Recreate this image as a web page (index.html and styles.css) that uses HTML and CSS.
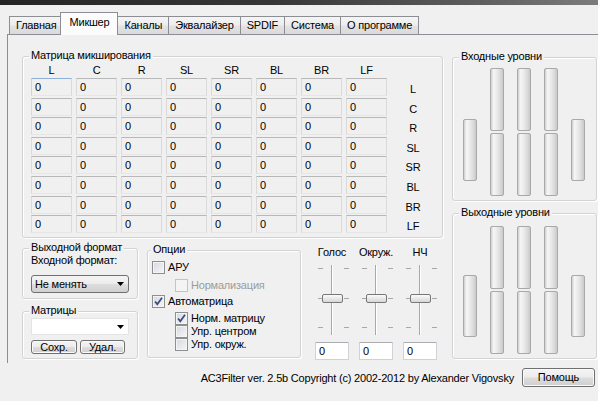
FILE: index.html
```html
<!DOCTYPE html>
<html lang="ru">
<head>
<meta charset="utf-8">
<title>AC3Filter</title>
<link rel="stylesheet" href="styles.css">
</head>
<body>
<div class="titlebar"></div>
<div class="tabs">
  <div class="tab">Главная</div>
  <div class="tab active">Микшер</div>
  <div class="tab">Каналы</div>
  <div class="tab">Эквалайзер</div>
  <div class="tab">SPDIF</div>
  <div class="tab">Система</div>
  <div class="tab">О программе</div>
</div>
<div class="panel">
  <div class="leftcol">
    <div class="group matrix">
      <div class="gtitle">Матрица микширования</div>
      <div class="mhead">
        <span>L</span><span>C</span><span>R</span><span>SL</span><span>SR</span><span>BL</span><span>BR</span><span>LF</span><span></span>
      </div>
      <div class="mgrid">
        <div class="cell focus">0</div><div class="cell">0</div><div class="cell">0</div><div class="cell">0</div><div class="cell">0</div><div class="cell">0</div><div class="cell">0</div><div class="cell">0</div><div class="rlabel">L</div>
        <div class="cell">0</div><div class="cell">0</div><div class="cell">0</div><div class="cell">0</div><div class="cell">0</div><div class="cell">0</div><div class="cell">0</div><div class="cell">0</div><div class="rlabel">C</div>
        <div class="cell">0</div><div class="cell">0</div><div class="cell">0</div><div class="cell">0</div><div class="cell">0</div><div class="cell">0</div><div class="cell">0</div><div class="cell">0</div><div class="rlabel">R</div>
        <div class="cell">0</div><div class="cell">0</div><div class="cell">0</div><div class="cell">0</div><div class="cell">0</div><div class="cell">0</div><div class="cell">0</div><div class="cell">0</div><div class="rlabel">SL</div>
        <div class="cell">0</div><div class="cell">0</div><div class="cell">0</div><div class="cell">0</div><div class="cell">0</div><div class="cell">0</div><div class="cell">0</div><div class="cell">0</div><div class="rlabel">SR</div>
        <div class="cell">0</div><div class="cell">0</div><div class="cell">0</div><div class="cell">0</div><div class="cell">0</div><div class="cell">0</div><div class="cell">0</div><div class="cell">0</div><div class="rlabel">BL</div>
        <div class="cell">0</div><div class="cell">0</div><div class="cell">0</div><div class="cell">0</div><div class="cell">0</div><div class="cell">0</div><div class="cell">0</div><div class="cell">0</div><div class="rlabel">BR</div>
        <div class="cell">0</div><div class="cell">0</div><div class="cell">0</div><div class="cell">0</div><div class="cell">0</div><div class="cell">0</div><div class="cell">0</div><div class="cell">0</div><div class="rlabel">LF</div>
      </div>
    </div>
    <div class="bottom">
      <div class="lcol">
        <div class="group fmt">
          <div class="gtitle">Выходной формат</div>
          <div class="flabel">Входной формат:</div>
          <div class="combo">
            <span>Не менять</span>
            <svg class="arrow" width="7" height="4" viewBox="0 0 7 4"><polygon points="0,0 7,0 3.5,4" fill="#000"/></svg>
          </div>
        </div>
        <div class="group mats">
          <div class="gtitle">Матрицы</div>
          <div class="ecombo">
            <svg class="arrow" width="7" height="4" viewBox="0 0 7 4"><polygon points="0,0 7,0 3.5,4" fill="#000"/></svg>
          </div>
          <div class="btns">
            <div class="btn save">Сохр.</div>
            <div class="btn del">Удал.</div>
          </div>
        </div>
      </div>
      <div class="group opts">
        <div class="gtitle">Опции</div>
        <div class="chk r1"><span class="box"></span><span>АРУ</span></div>
        <div class="chk sub r2 disabled"><span class="box"></span><span>Нормализация</span></div>
        <div class="chk r3"><span class="box"><svg width="11" height="11" viewBox="0 0 11 11"><path d="M2 5.5 L4.3 8.2 L9 1.8" fill="none" stroke="#3c4f7c" stroke-width="1.8"/></svg></span><span>Автоматрица</span></div>
        <div class="chk sub r4"><span class="box"><svg width="11" height="11" viewBox="0 0 11 11"><path d="M2 5.5 L4.3 8.2 L9 1.8" fill="none" stroke="#3c4f7c" stroke-width="1.8"/></svg></span><span>Норм. матрицу</span></div>
        <div class="chk sub"><span class="box"></span><span>Упр. центром</span></div>
        <div class="chk sub"><span class="box"></span><span>Упр. окруж.</span></div>
      </div>
      <div class="sliders">
        <div class="scol">
          <div class="slabel">Голос</div>
          <div class="slider">
            <span class="track"></span>
            <span class="tick tl t1"></span><span class="tick tr t1"></span>
            <span class="tick tl t2"></span><span class="tick tr t2"></span>
            <span class="tick tl t3"></span><span class="tick tr t3"></span>
            <span class="thumb"></span>
          </div>
          <div class="sedit">0</div>
        </div>
        <div class="scol">
          <div class="slabel">Окруж.</div>
          <div class="slider">
            <span class="track"></span>
            <span class="tick tl t1"></span><span class="tick tr t1"></span>
            <span class="tick tl t2"></span><span class="tick tr t2"></span>
            <span class="tick tl t3"></span><span class="tick tr t3"></span>
            <span class="thumb"></span>
          </div>
          <div class="sedit">0</div>
        </div>
        <div class="scol">
          <div class="slabel">НЧ</div>
          <div class="slider">
            <span class="track"></span>
            <span class="tick tl t1"></span><span class="tick tr t1"></span>
            <span class="tick tl t2"></span><span class="tick tr t2"></span>
            <span class="tick tl t3"></span><span class="tick tr t3"></span>
            <span class="thumb"></span>
          </div>
          <div class="sedit">0</div>
        </div>
      </div>
    </div>
  </div>
  <div class="rightcol">
    <div class="group levels lin">
      <div class="gtitle">Входные уровни</div>
      <div class="bars">
        <div class="bar side"></div>
        <div class="stack"><div class="bar"></div><div class="bar"></div></div>
        <div class="stack"><div class="bar"></div><div class="bar"></div></div>
        <div class="stack"><div class="bar"></div><div class="bar"></div></div>
        <div class="bar side"></div>
      </div>
    </div>
    <div class="group levels lout">
      <div class="gtitle">Выходные уровни</div>
      <div class="bars">
        <div class="bar side"></div>
        <div class="stack"><div class="bar"></div><div class="bar"></div></div>
        <div class="stack"><div class="bar"></div><div class="bar"></div></div>
        <div class="stack"><div class="bar"></div><div class="bar"></div></div>
        <div class="bar side"></div>
      </div>
    </div>
  </div>
</div>
<div class="footer">
  <span class="copy">AC3Filter ver. 2.5b Copyright (c) 2002-2012 by Alexander Vigovsky</span>
  <div class="btn help">Помощь</div>
</div>
</body>
</html>
```
FILE: styles.css
```css
* { box-sizing: border-box; }
html, body { margin: 0; padding: 0; }
body {
  width: 598px;
  height: 401px;
  overflow: hidden;
  background: #f0f0f0;
  font-family: "Liberation Sans", Arial, sans-serif;
  font-size: 11px;
  letter-spacing: -0.2px;
  color: #000;
}

.titlebar {
  height: 5px;
  background: linear-gradient(to right, #252525, #363636 45%, #5e5e5e 80%, #7c7c7c);
}

/* tabs */
.tabs {
  display: flex;
  align-items: flex-end;
  height: 21px;
  margin: 8px 0 0 9px;
}
.tab {
  height: 18px;
  line-height: 16px;
  padding: 0 6px;
  border: 1px solid #8c8e94;
  border-bottom: none;
  margin-right: -1px;
  background: linear-gradient(#f5f5f5, #ededed 45%, #e2e2e2 55%, #dadada);
  white-space: nowrap;
}
.tab.active {
  position: relative;
  z-index: 1;
  height: 23px;
  line-height: 19px;
  margin: 0 -1px -1px -2px;
  padding: 0 8px;
  background: #fcfcfc;
}

/* panel */
.panel {
  display: flex;
  margin-left: 7px;
  width: 600px;
  height: 329px;
  padding-left: 14px;
  border-left: 1px solid #8c8e94;
  border-top: 1px solid #8c8e94;
  background: #f0f0f0;
}
.leftcol { width: 421px; }
.rightcol { width: 145px; margin-left: 9px; }

.group {
  border: 1px solid #d3d3d3;
  border-radius: 3px;
  box-shadow: inset 1px 1px 0 #fff, 1px 1px 0 #fff;
}
.gtitle {
  width: fit-content;
  height: 13px;
  line-height: 13px;
  margin: -8px 0 0 6px;
  padding: 0 2px;
  background: #f0f0f0;
  white-space: nowrap;
}

/* matrix */
.matrix { margin-top: 21px; height: 182px; }
.mhead, .mgrid {
  display: grid;
  grid-template-columns: repeat(8, 41px) 44px;
  column-gap: 4px;
  padding-left: 8px;
}
.mhead { height: 16px; line-height: 16px; text-align: center; }
.mgrid { grid-auto-rows: 18px; row-gap: 1.6px; }
.cell {
  border: 1px solid #dadada;
  border-top-color: #b8b8b8;
  border-bottom-color: #e6e6e6;
  background: #f0f0f0;
  line-height: 16px;
  padding-left: 3px;
}
.cell.focus { border-top-color: #8fb0d8; border-left-color: #c5d5e8; }
.rlabel { text-align: center; line-height: 18px; padding-top: 2px; }

/* bottom row */
.bottom { display: flex; }
.lcol { width: 116px; margin-top: 10px; }
.fmt { height: 51px; }
.flabel { padding-left: 8px; line-height: 13px; }
.combo {
  display: flex;
  align-items: center;
  justify-content: space-between;
  width: 98px;
  height: 18px;
  margin: 8px 0 0 8px;
  padding: 0 4px 0 3px;
  border: 1px solid #707070;
  border-radius: 3px;
  background: linear-gradient(#f4f4f4, #ececec 48%, #dddddd 52%, #d0d0d0);
}
.arrow { display: block; }
.mats { margin-top: 12px; height: 48px; }
.ecombo {
  display: flex;
  align-items: center;
  justify-content: flex-end;
  width: 98px;
  height: 17px;
  margin: 1px 0 0 8px;
  padding-right: 4px;
  background: #fff;
  border: 1px solid #e4e4e4;
}
.btns { display: flex; gap: 3px; margin: 5px 0 0 8px; }
.btn {
  height: 14px;
  line-height: 12px;
  text-align: center;
  border: 1px solid #707070;
  border-radius: 3px;
  background: linear-gradient(#f4f4f4, #ececec 48%, #dddddd 52%, #cfcfcf);
  box-shadow: inset 0 0 0 1px #fafafa;
}
.btn.save { width: 46px; }
.btn.del { width: 45px; }

.opts { width: 154px; height: 108px; margin: 12px 0 0 9px; }
.opts .gtitle { margin-left: 3px; }
.chk {
  display: flex;
  align-items: center;
  gap: 3px;
  height: 13px;
  line-height: 13px;
  padding-left: 4px;
}
.chk.sub { padding-left: 27px; }
.chk.r1 { margin-top: 5px; }
.chk.r2 { margin-top: 5px; }
.chk.r3 { margin-top: 3px; }
.chk.r4 { margin-top: 4px; }
.box {
  display: flex;
  align-items: center;
  justify-content: center;
  width: 13px;
  height: 13px;
  flex: none;
  border: 1px solid #8e8f8f;
  background: linear-gradient(135deg, #d4d8de, #f7f7f7);
  box-shadow: inset 0 0 0 1px #f4f4f4;
}
.box svg { display: block; }
.chk.disabled { color: #9c9c9c; }
.chk.disabled .box { border-color: #c4c4c4; background: #f4f4f4; box-shadow: none; }

/* sliders */
.sliders { display: flex; padding-left: 8px; margin-left: 1px; }
.scol { width: 44px; display: flex; flex-direction: column; align-items: center; }
.slabel { margin-top: 8px; line-height: 13px; white-space: nowrap; }
.slider { position: relative; width: 44px; height: 76px; margin-top: 3px; }
.track {
  position: absolute;
  left: 21px;
  top: 3px;
  width: 2px;
  height: 70px;
  border-left: 1px solid #a8a8a8;
  border-right: 1px solid #fff;
}
.tick { position: absolute; width: 5px; height: 1px; background: #a8a8a8; }
.tick.tl { left: 8px; }
.tick.tr { left: 34px; }
.tick.t1 { top: 6px; }
.tick.t2 { top: 36px; }
.tick.t3 { top: 65px; }
.thumb {
  position: absolute;
  left: 12px;
  top: 32px;
  width: 21px;
  height: 9px;
  border: 1px solid #777;
  border-radius: 2px;
  background: linear-gradient(#fbfbfb, #e8e8e8 50%, #d8d8d8);
}
.sedit {
  margin-top: 4px;
  width: 34px;
  height: 18px;
  line-height: 16px;
  padding-left: 3px;
  background: #fff;
  border: 1px solid #cfd2d8;
  border-top-color: #abadb3;
}

/* levels */
.lin { margin-top: 22px; height: 144px; }
.lout { margin-top: 12px; height: 146px; }
.bars {
  display: flex;
  align-items: flex-start;
  gap: 13px;
  padding-left: 10px;
  margin-top: 5px;
}
.lout .bars { margin-top: 7px; }
.stack { display: flex; flex-direction: column; gap: 2px; }
.bar {
  width: 14px;
  height: 63px;
  border: 1px solid #a9a9a9;
  border-radius: 2px;
  background: linear-gradient(to right, #cfcfcf 0%, #f6f6f6 22%, #ececec 45%, #dcdcdc 75%, #c9c9c9 100%);
}
.bar.side { height: 62px; margin-top: 51px; }
.lout .bar.side { margin-top: 49px; }

/* footer */
.footer {
  display: flex;
  justify-content: flex-end;
  align-items: center;
  gap: 8px;
  padding-right: 3px;
  margin-top: 5px;
}
.copy { white-space: nowrap; }
.btn.help { width: 73px; height: 19px; line-height: 17px; }
```
